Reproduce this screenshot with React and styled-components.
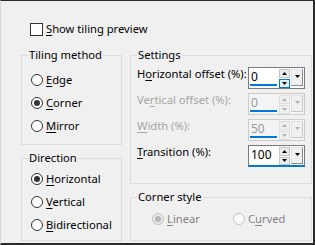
import React from 'react';
import styled, { createGlobalStyle, css } from 'styled-components';

const GlobalStyle = createGlobalStyle`
  html, body {
    margin: 0;
    padding: 0;
    background: #f0f0f0;
  }
  body {
    font-family: "Noto Sans", "Segoe UI", sans-serif;
    font-size: 11.2px;
    color: #000;
  }
  u {
    text-decoration-thickness: 1px;
    text-underline-offset: 2px;
  }
`;

const Dialog = styled.div`
  box-sizing: border-box;
  width: 315px;
  height: 245px;
  background: #f0f0f0;
  border-top: 1px solid #2b2b2b;
  border-right: 2px solid #2b2b2b;
  border-bottom: 2px solid #2b2b2b;
  border-left: 1px solid #d9d9d9;
  padding: 20px 1px 0 20px;
`;

const CheckRow = styled.label`
  display: flex;
  align-items: center;
  gap: 3px;
  height: 16px;
  margin: 0 0 10px 9px;
  line-height: 16px;
`;

const CheckBox = styled.span`
  box-sizing: border-box;
  width: 13px;
  height: 13px;
  border: 1px solid #333;
  background: #fff;
  flex: none;
`;

const Columns = styled.div`
  display: flex;
  gap: 8px;
`;

const Column = styled.div`
  display: flex;
  flex-direction: column;
  gap: 5px;
  width: ${p => p.$width}px;
`;

const Group = styled.fieldset`
  margin: 0;
  min-width: 0;
  border: 1px solid #dcdcdc;
  padding: ${p => p.$top}px 0 ${p => p.$bottom}px 0;
`;

const Legend = styled.legend`
  padding: 0 1px;
  margin-left: 6px;
  line-height: 16px;
`;

const GroupBody = styled.div`
  padding: 0 ${p => p.$right || 0}px 0 ${p => p.$left}px;
`;

const RadioRow = styled.div`
  display: flex;
  align-items: center;
  gap: 3px;
  height: 23px;
  line-height: 16px;
  white-space: nowrap;
  width: ${p => (p.$width ? `${p.$width}px` : 'auto')};
  color: ${p => (p.$disabled ? '#838383' : '#000')};
`;

const RadioCircle = styled.span`
  box-sizing: border-box;
  width: 12px;
  height: 12px;
  border-radius: 50%;
  flex: none;
  display: flex;
  align-items: center;
  justify-content: center;
  border: 1px solid ${p => (p.$disabled ? '#c4c4c4' : '#333')};
  background: ${p => (p.$disabled ? (p.$checked ? '#e6e6e6' : '#fafafa') : '#fff')};

  &::after {
    content: '';
    width: 6px;
    height: 6px;
    border-radius: 50%;
    background: ${p => (p.$disabled ? '#b8b8b8' : '#333')};
    display: ${p => (p.$checked ? 'block' : 'none')};
  }
`;

const InlineRadios = styled.div`
  display: flex;
`;

const SettingRows = styled.div`
  display: flex;
  flex-direction: column;
  gap: 4px;
`;

const SettingRow = styled.div`
  display: flex;
  justify-content: space-between;
  align-items: flex-start;
  height: 22px;
`;

const SettingLabel = styled.span`
  line-height: 16px;
  margin-top: -1px;
  white-space: nowrap;
  color: ${p => (p.$disabled ? '#a6a6a6' : '#000')};
`;

const SpinBox = styled.div`
  box-sizing: border-box;
  display: flex;
  gap: 1px;
  width: 57px;
  height: 22px;
  padding: 0 1px 0 0;
  border: 1px solid ${p => (p.$disabled ? '#cccccc' : '#7a7a7a')};
  background: ${p => (p.$disabled ? '#f4f4f4' : '#fff')};
  ${p =>
    p.$focused &&
    css`
      border-bottom: 2px solid #0078d7;
    `}
`;

const Field = styled.div`
  box-sizing: border-box;
  width: 27px;
  margin: 0 1px;
  height: 18px;
  padding: 1px 0 0 1px;
  line-height: 15px;
  font-size: 12px;
  color: ${p => (p.$disabled ? '#9a9a9a' : '#000')};
  border-bottom: 2px solid ${p => (p.$underline ? '#0078d7' : 'transparent')};
`;

const SpinColumn = styled.div`
  display: flex;
  flex-direction: column;
  gap: 1px;
  padding-top: 1px;
  width: 11px;
`;

const SpinButton = styled.div`
  box-sizing: border-box;
  height: 9px;
  display: flex;
  align-items: center;
  justify-content: center;
  border: 1px solid ${p => (p.$hover ? '#0078d7' : p.$disabled ? '#dedede' : '#c4c4c4')};
  background: ${p => (p.$hover ? '#e5f1fb' : p.$disabled ? '#f0f0f0' : '#ececec')};
`;

const DropButton = styled.div`
  box-sizing: border-box;
  width: 12px;
  height: 17px;
  margin-top: 1px;
  display: flex;
  justify-content: center;
  padding-top: 5px;
  border: 1px solid #e3e3e3;
  border-right-color: ${p => (p.$disabled ? '#c8c8c8' : '#8a8a8a')};
  border-bottom-color: ${p => (p.$disabled ? '#c8c8c8' : '#8a8a8a')};
  background: #f0f0f0;
`;

const Arrow = ({ up, color }) => (
  <svg width="5" height="3" viewBox="0 0 5 3">
    <polygon points={up ? '0,3 5,3 2.5,0' : '0,0 5,0 2.5,3'} fill={color} />
  </svg>
);

const Spinner = ({ value, disabled, focused, hoverDown }) => {
  const arrow = disabled ? '#b0b0b0' : '#000';
  return (
    <SpinBox $disabled={disabled} $focused={focused}>
      <Field $disabled={disabled} $underline={!focused}>{value}</Field>
      <SpinColumn>
        <SpinButton $disabled={disabled}>
          <Arrow up color={arrow} />
        </SpinButton>
        <SpinButton $disabled={disabled} $hover={hoverDown}>
          <Arrow color={arrow} />
        </SpinButton>
      </SpinColumn>
      <DropButton $disabled={disabled}>
        <Arrow color={arrow} />
      </DropButton>
    </SpinBox>
  );
};

const Radio = ({ children, checked, disabled, width }) => (
  <RadioRow $disabled={disabled} $width={width}>
    <RadioCircle $checked={checked} $disabled={disabled} />
    <span>{children}</span>
  </RadioRow>
);

const App = () => (
  <>
    <GlobalStyle />
    <Dialog>
      <CheckRow>
        <CheckBox />
        <span>
          <u>S</u>how tiling preview
        </span>
      </CheckRow>
      <Columns>
        <Column $width={101}>
          <Group $top={5} $bottom={7}>
            <Legend>Tiling method</Legend>
            <GroupBody $left={9}>
              <Radio>
                <u>E</u>dge
              </Radio>
              <Radio checked>
                <u>C</u>orner
              </Radio>
              <Radio>
                <u>M</u>irror
              </Radio>
            </GroupBody>
          </Group>
          <Group $top={1} $bottom={4}>
            <Legend>Direction</Legend>
            <GroupBody $left={9}>
              <Radio checked>
                <u>H</u>orizontal
              </Radio>
              <Radio>
                <u>V</u>ertical
              </Radio>
              <Radio>
                <u>B</u>idirectional
              </Radio>
            </GroupBody>
          </Group>
        </Column>
        <Column $width={182}>
          <Group $top={4} $bottom={16}>
            <Legend>Settings</Legend>
            <GroupBody $left={6} $right={6}>
              <SettingRows>
                <SettingRow>
                  <SettingLabel>
                    H<u>o</u>rizontal offset (%):
                  </SettingLabel>
                  <Spinner value="0" hoverDown />
                </SettingRow>
                <SettingRow>
                  <SettingLabel $disabled>
                    Ve<u>r</u>tical offset (%):
                  </SettingLabel>
                  <Spinner value="0" disabled />
                </SettingRow>
                <SettingRow>
                  <SettingLabel $disabled>
                    <u>W</u>idth (%):
                  </SettingLabel>
                  <Spinner value="50" disabled />
                </SettingRow>
                <SettingRow>
                  <SettingLabel>
                    <u>T</u>ransition (%):
                  </SettingLabel>
                  <Spinner value="100" focused />
                </SettingRow>
              </SettingRows>
            </GroupBody>
          </Group>
          <Group $top={2} $bottom={10}>
            <Legend>Corner style</Legend>
            <GroupBody $left={21}>
              <InlineRadios>
                <Radio checked disabled width={81}>
                  <u>L</u>inear
                </Radio>
                <Radio disabled>
                  C<u>u</u>rved
                </Radio>
              </InlineRadios>
            </GroupBody>
          </Group>
        </Column>
      </Columns>
    </Dialog>
  </>
);

export default App;
